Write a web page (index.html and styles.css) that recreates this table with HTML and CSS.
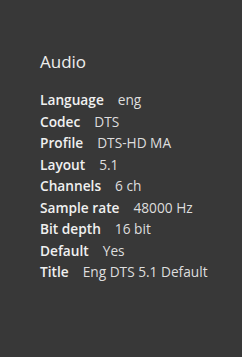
FILE: index.html
```html
<!DOCTYPE html>
<html lang="en">
<head>
    <meta charset="UTF-8">
    <meta name="viewport" content="width=device-width, initial-scale=1.0">
    <title>Audio</title>
    <link rel="stylesheet" href="styles.css">
</head>
<body>
    <div class="panel">
        <h2 class="panel-title">Audio</h2>
        <div class="info">
            <div class="row"><span class="label">Language</span><span class="value">eng</span></div>
            <div class="row"><span class="label">Codec</span><span class="value">DTS</span></div>
            <div class="row"><span class="label">Profile</span><span class="value">DTS-HD MA</span></div>
            <div class="row"><span class="label">Layout</span><span class="value">5.1</span></div>
            <div class="row"><span class="label">Channels</span><span class="value">6 ch</span></div>
            <div class="row"><span class="label">Sample rate</span><span class="value">48000 Hz</span></div>
            <div class="row"><span class="label">Bit depth</span><span class="value">16 bit</span></div>
            <div class="row"><span class="label">Default</span><span class="value">Yes</span></div>
            <div class="row"><span class="label">Title</span><span class="value">Eng DTS 5.1 Default</span></div>
        </div>
    </div>
</body>
</html>
```

FILE: styles.css
```css
html, body {
    margin: 0;
    height: 100%;
}
body {
    background-color: #383838;
    color: #e6e6e6;
    font-family: 'Open Sans', 'Noto Sans', sans-serif;
}
.panel {
    padding: 50px 20px 0 40px;
}
.panel-title {
    margin: 0 0 15px 0;
    font-size: 17px;
    font-weight: 400;
    line-height: 24px;
    color: #eeeeee;
}
.row {
    font-size: 13.7px;
    line-height: 21.5px;
    white-space: nowrap;
}
.label {
    font-weight: 600;
    color: #f0f0f0;
    margin-right: 14px;
}
.value {
    color: #dedede;
}
```
